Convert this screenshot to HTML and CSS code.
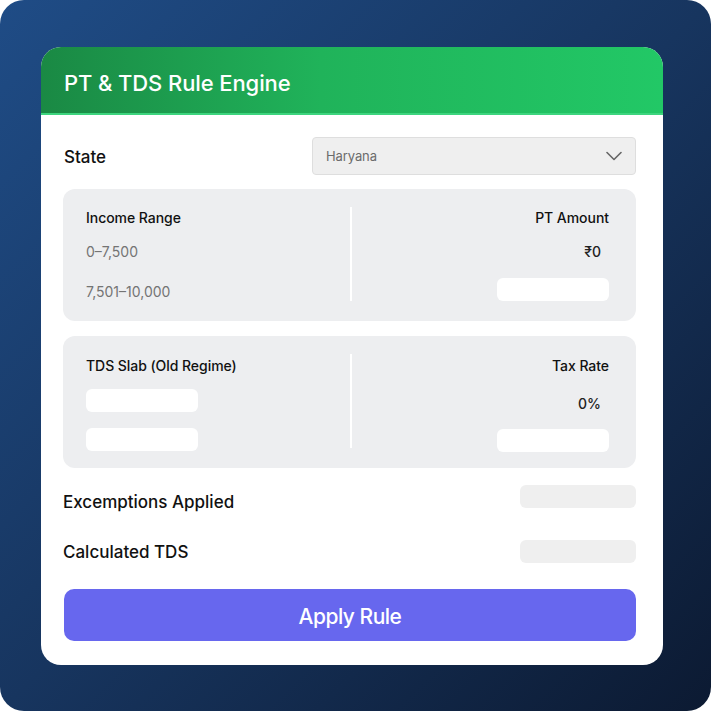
FILE: index.html
```html
<!DOCTYPE html>
<html>
<head>
<meta charset="utf-8">
<link rel="stylesheet" href="styles.css">
</head>
<body>
<div class="frame">
  <div class="card">
    <div class="card-head">PT &amp; TDS Rule Engine</div>
    <div class="card-body">
      <div class="state-row">
        <span class="label">State</span>
        <div class="select">
          <span>Haryana</span>
          <svg class="chev" width="16" height="10" viewBox="0 0 16 10"><path d="M1 1.5 L8 8.5 L15 1.5" fill="none" stroke="#666" stroke-width="1.6" stroke-linecap="round" stroke-linejoin="round"/></svg>
        </div>
      </div>

      <div class="panel pt">
        <div class="col left">
          <div class="col-head">Income Range</div>
          <div class="muted r1">0–7,500</div>
          <div class="muted r2">7,501–10,000</div>
        </div>
        <div class="divider"></div>
        <div class="col right">
          <div class="col-head">PT Amount</div>
          <div class="val r1">₹0</div>
          <div class="pill r2"></div>
        </div>
      </div>

      <div class="panel tds">
        <div class="col left">
          <div class="col-head">TDS Slab (Old Regime)</div>
          <div class="pill r1"></div>
          <div class="pill r2"></div>
        </div>
        <div class="divider"></div>
        <div class="col right">
          <div class="col-head">Tax Rate</div>
          <div class="val r1">0%</div>
          <div class="pill r2"></div>
        </div>
      </div>

      <div class="field-row first">
        <span class="label">Excemptions Applied</span>
        <div class="field-box"></div>
      </div>
      <div class="field-row second">
        <span class="label">Calculated TDS</span>
        <div class="field-box"></div>
      </div>

      <button class="apply">Apply Rule</button>
    </div>
  </div>
</div>
</body>
</html>
```
FILE: styles.css
```css
* { box-sizing: border-box; }
html, body { margin: 0; padding: 0; background: #ffffff; }
body { width: 711px; height: 711px; font-family: "Inter", "Roboto", sans-serif; }

.frame {
  width: 711px;
  height: 711px;
  border-radius: 24px;
  background: linear-gradient(135deg, #1f4c86 0%, #17355f 50%, #0c1a32 100%);
  padding: 47px 48px 46px 41px;
}

.card {
  width: 622px;
  height: 618px;
  background: #ffffff;
  border-radius: 20px;
  overflow: hidden;
  display: flex;
  flex-direction: column;
}

.card-head {
  height: 68px;
  flex: none;
  background: linear-gradient(90deg, #1a8944 0%, #20b35a 45%, #22c866 100%);
  border-bottom: 2px solid #3dd57e;
  color: #ffffff;
  font-size: 22px;
  font-weight: 500;
  letter-spacing: -0.1px;
  padding: 6px 0 0 23px;
  display: flex;
  align-items: center;
}

.card-body {
  padding: 22px 27px 0 22px;
  display: flex;
  flex-direction: column;
}

.label {
  font-size: 17px;
  font-weight: 500;
  color: #111;
  letter-spacing: 0;
}

.state-row {
  display: flex;
  align-items: center;
  justify-content: space-between;
  padding-left: 1px;
}
.state-row .label { position: relative; top: 1px; }

.select {
  width: 324px;
  height: 38px;
  background: #efefef;
  border: 1px solid #dedede;
  border-radius: 4px;
  display: flex;
  align-items: center;
  justify-content: space-between;
  padding: 0 13px 0 13px;
  font-size: 13px;
  color: #6b6b6b;
  letter-spacing: -0.1px;
}

.panel {
  margin-top: 14px;
  height: 132px;
  background: #edeef0;
  border-radius: 12px;
  display: flex;
  padding: 18px 27px 20px 23px;
}
.panel.tds { margin-top: 15px; }

.col.left { flex: none; width: 264px; }
.col.right { flex: 1; text-align: right; }

.col-head {
  font-size: 14px;
  font-weight: 500;
  color: #111;
  letter-spacing: -0.05px;
  line-height: 20px;
  margin-top: 1px;
}
.panel.tds .col-head { margin-top: 2px; }

.divider {
  width: 2px;
  background: #ffffff;
  flex: none;
}

.muted {
  font-size: 14px;
  color: #747474;
  letter-spacing: 0;
  line-height: 20px;
}
.col.left .muted.r1 { margin-top: 14px; }
.col.left .muted.r2 { margin-top: 20px; }

.val {
  font-size: 14px;
  font-weight: 500;
  color: #222;
  line-height: 20px;
  margin-top: 14px;
  padding-right: 8px;
}
.panel.tds .val { margin-top: 18px; }

.pill {
  height: 23px;
  width: 112px;
  background: #ffffff;
  border-radius: 6px;
}
.col.right .pill { margin-left: auto; }
.panel.pt .col.right .pill.r2 { margin-top: 16px; }
.panel.tds .col.right .pill.r2 { margin-top: 15px; }
.col.left .pill.r1 { margin-top: 13px; }
.col.left .pill.r2 { margin-top: 16px; }

.field-row {
  display: flex;
  align-items: center;
  justify-content: space-between;
}
.field-row.first { margin-top: 17px; }
.field-row.first .label { position: relative; top: 5px; }
.field-row.second { margin-top: 32px; }

.field-box {
  width: 116px;
  height: 23px;
  background: #efefef;
  border-radius: 6px;
}

.apply {
  margin-top: 26px;
  margin-left: 1px;
  height: 52px;
  border: none;
  border-radius: 10px;
  background: #6767ee;
  color: #ffffff;
  font-family: "Inter", "Roboto", sans-serif;
  font-size: 21px;
  font-weight: 500;
  letter-spacing: -0.5px;
  padding-top: 3px;
}
```
